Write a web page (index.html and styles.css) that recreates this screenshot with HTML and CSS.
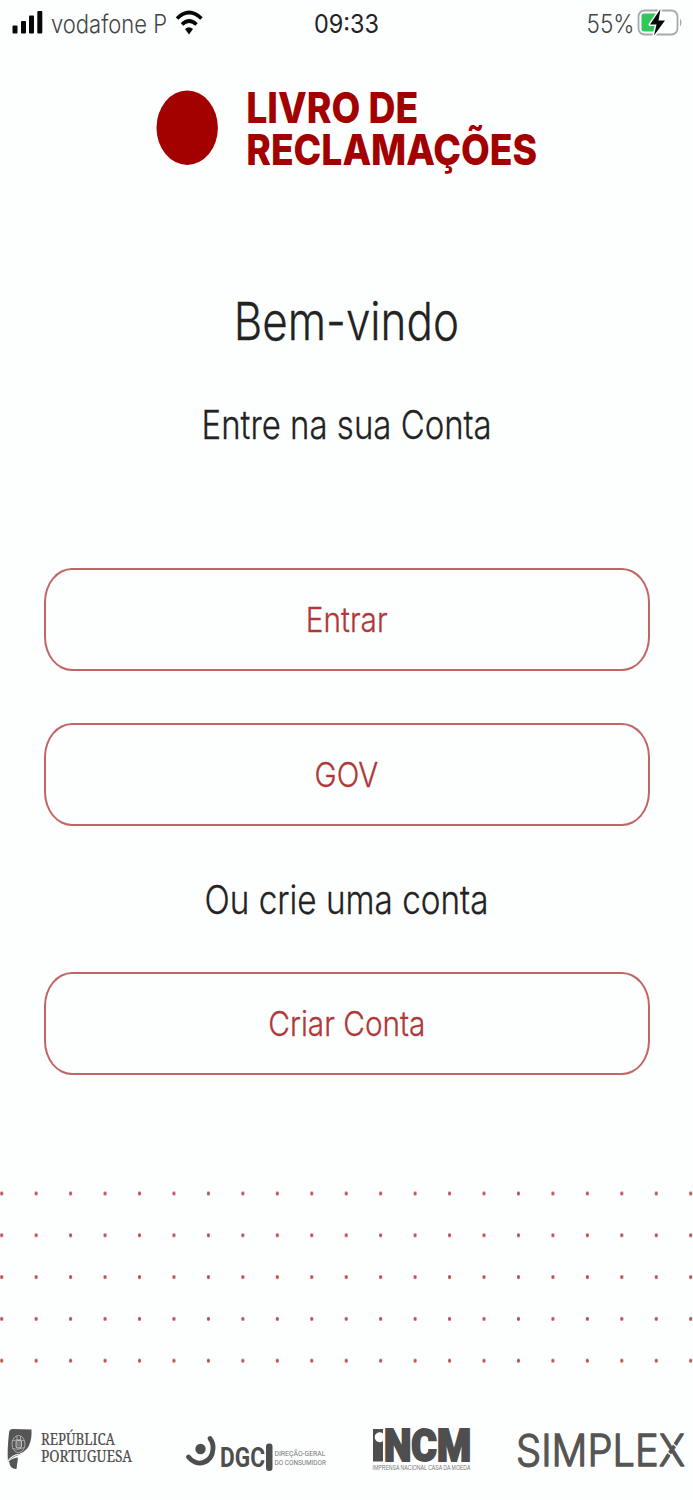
FILE: index.html
```
<!DOCTYPE html>
<html lang="pt">
<head>
<meta charset="utf-8">
<title>Livro de Reclamações</title>
<link rel="stylesheet" href="styles.css">
</head>
<body>
<header class="status">
  <svg class="status-left" width="220" height="46" viewBox="0 0 220 46">
    <g fill="#080808"><rect x="12.5" y="25.5" width="5" height="8" rx="1"/><rect x="21" y="21" width="5" height="12.5" rx="1"/><rect x="29" y="15.5" width="5" height="18" rx="1"/><rect x="37.3" y="11" width="5" height="22.5" rx="1"/></g>
    <text class="carrier" x="51" y="32.5" textLength="116" lengthAdjust="spacingAndGlyphs">vodafone P</text>
    <g fill="none" stroke="#080808" stroke-width="3.6"><path d="M177 18.5Q189 6.5 201.5 18.5"/><path d="M182 24.5Q189 17.5 196.5 24.5"/></g>
    <path d="M185 29Q189 25.5 193 29L189 34.5Z" fill="#080808"/>
  </svg>
  <svg class="status-time" width="80" height="46" viewBox="0 0 80 46"><text class="clock" x="8" y="32.5" textLength="65" lengthAdjust="spacingAndGlyphs">09:33</text></svg>
  <svg class="status-right" width="113" height="46" viewBox="0 0 113 46">
    <text class="percent" x="7.5" y="32.5" textLength="48" lengthAdjust="spacingAndGlyphs">55%</text>
    <rect x="59.5" y="10.5" width="39" height="24" rx="6" fill="none" stroke="#aaa" stroke-width="1.8"/>
    <path d="M65 13.5H78V31.5H65Q62.5 31.5 62.5 29V16Q62.5 13.5 65 13.5Z" fill="#31c759"/>
    <path d="M101 18.5Q104 22.5 101 26.5Z" fill="#aaa"/>
    <path d="M81.5 9L71 24.5H77.5L75 35.5L86 20.5H79.5Z" fill="#080808" stroke="#fdfefe" stroke-width="3" stroke-linejoin="round" paint-order="stroke"/>
  </svg>
</header>
<div class="brand">
  <svg width="405" height="100" viewBox="145 80 405 100">
    <ellipse cx="187.2" cy="127.7" rx="30.7" ry="37.2" fill="#a30000"/>
    <g class="brand-name"><text x="246.2" y="122.5" textLength="172" lengthAdjust="spacingAndGlyphs">LIVRO DE</text><text x="246.2" y="164.7" textLength="291" lengthAdjust="spacingAndGlyphs">RECLAMAÇÕES</text></g>
  </svg>
</div>
<main class="login">
  <h1 class="title"><span>Bem-vindo</span></h1>
  <p class="subtitle"><span>Entre na sua Conta</span></p>
  <div class="actions">
    <button class="btn"><span>Entrar</span></button>
    <button class="btn"><span>GOV</span></button>
  </div>
  <p class="create"><span>Ou crie uma conta</span></p>
  <button class="btn"><span>Criar Conta</span></button>
</main>
<svg class="dots" width="693" height="190" viewBox="0 0 693 190">
  <defs><pattern id="dot" x="-15.5" y="-7.4" width="34.45" height="41.8" patternUnits="userSpaceOnUse"><ellipse cx="17.2" cy="20.9" rx="1.6" ry="2" fill="#bb4b4b"/></pattern></defs>
  <rect width="693" height="190" fill="url(#dot)"/>
</svg>
<footer class="partners">
  <svg width="175" height="60" viewBox="0 0 175 60">
    <path d="M9 13Q9 9 13 9L31.5 9.5Q32.5 29 20 34.5Q11 37 8 42Q7 30 9 13Z" fill="#555"/>
    <path d="M9 41Q12 38 18 37.5L16.5 49Q10 49.5 9 41Z" fill="#555"/>
    <g fill="none" stroke="#aaa" stroke-width="1"><ellipse cx="18.5" cy="24" rx="6.5" ry="8.5"/><path d="M12 21Q18 18 25 21M12 28Q18 31 25 27M17 16V20M20.5 16V20"/></g>
    <rect x="16" y="20.5" width="5.5" height="7.5" rx="1.5" fill="#777" stroke="#ddd" stroke-width=".8"/>
    <path d="M8 41Q12 35 20 34Q29 31 31 22" fill="none" stroke="#f2f2f2" stroke-width="1.2"/>
    <g class="republic"><text x="41" y="24.5" textLength="74" lengthAdjust="spacingAndGlyphs">REPÚBLICA</text><text x="41" y="41.5" textLength="91" lengthAdjust="spacingAndGlyphs">PORTUGUESA</text></g>
  </svg>
  <svg width="175" height="60" viewBox="0 0 175 60">
    <circle cx="25.5" cy="29" r="5.2" fill="#4e4e4e"/>
    <path d="M13.5 37C22 48 37 43 38 29Q38.5 23 35 18.5" fill="none" stroke="#4e4e4e" stroke-width="4.8" stroke-linecap="round"/>
    <text class="dgc" x="45" y="46.5" textLength="45" lengthAdjust="spacingAndGlyphs">DGC</text>
    <rect x="91" y="23.5" width="6.5" height="27.5" rx="3" fill="#4e4e4e"/>
    <g class="dgc-small"><text x="99.5" y="36.2" textLength="51" lengthAdjust="spacingAndGlyphs">DIREÇÃO-GERAL</text><text x="99.5" y="44.7" textLength="51.5" lengthAdjust="spacingAndGlyphs">DO CONSUMIDOR</text></g>
  </svg>
  <svg width="155" height="60" viewBox="350 0 155 60">
    <path d="M373 9H383V13.5A5 5 0 1 0 383 21V41.5H373Z" fill="#4e4e4e"/>
    <text class="incm" x="384" y="41" textLength="87" lengthAdjust="spacingAndGlyphs">NCM</text>
    <text class="incm-small" x="372.5" y="49.5" textLength="98" lengthAdjust="spacingAndGlyphs">IMPRENSA NACIONAL CASA DA MOEDA</text>
  </svg>
  <svg width="188" height="60" viewBox="505 0 188 60">
    <text class="simplex" x="516" y="45.5" textLength="169" lengthAdjust="spacingAndGlyphs">SIMPLEX</text>
    <path d="M671.5 22.5L677.5 27.500M666 31L672 36" stroke="#fdfefe" stroke-width="1.3"/>
  </svg>
</footer>
</body>
</html>
```
FILE: styles.css
```
* { box-sizing: border-box; }
body { margin: 0; width: 693px; height: 1500px; overflow: hidden; background: #fdfefe; font-family: Inter, "Noto Sans", sans-serif; color: #222; display: flex; flex-direction: column; }
svg { display: block; flex: none; overflow: visible; }
h1, p { margin: 0; font-weight: 350; }
.status { display: flex; height: 46px; }
.status-left { margin-right: 87px; }
.status-time { margin: 0 193px 0 -1px; }
.carrier, .percent { font-size: 25.5px; font-weight: 350; fill: #444; }
.clock { font-size: 25.5px; font-weight: 400; fill: #222; }
.brand { padding: 34px 0 0 145px; height: 134px; }
.brand-name { font-size: 43px; font-weight: 800; fill: #a30000; }
.login { display: flex; flex-direction: column; align-items: center; height: 1000px; padding-top: 110px; }
.login span { display: inline-block; white-space: nowrap; -webkit-text-stroke: .3px currentColor; }
.title { font-size: 52px; line-height: 64px; }
.title span { transform: scaleX(.845); }
.subtitle { margin-top: 47px; font-size: 39px; line-height: 48px; }
.subtitle span { transform: scaleX(.845); }
.actions { display: flex; flex-direction: column; gap: 52px; margin-top: 119px; }
.btn { width: 606px; height: 103px; padding: 0; border: 2px solid #c26565; border-radius: 28px / 34px; background: transparent; color: #b03838; font: 350 34px/42px Inter, "Noto Sans", sans-serif; }
.btn span { transform: scaleX(.875); }
.create { margin: 50px 0 48px; font-size: 39px; line-height: 48px; }
.create span { transform: scaleX(.853); }
.partners { display: flex; margin-top: 50px; height: 60px; }
.republic { font-family: "Noto Serif", "Liberation Serif", serif; font-size: 17px; fill: #4c4c4c; stroke: #4c4c4c; stroke-width: .2; }
.dgc { font-family: Roboto, sans-serif; font-size: 27px; font-weight: 700; fill: #4e4e4e; }
.dgc-small { font-family: Roboto, sans-serif; font-size: 7.5px; fill: #777; }
.incm { font-family: Roboto, sans-serif; font-size: 43.5px; font-weight: 900; fill: #4e4e4e; stroke: #4e4e4e; stroke-width: 2; }
.incm-small { font-family: "Liberation Sans", sans-serif; font-size: 7px; fill: #777; }
.simplex { font-size: 43.5px; font-weight: 300; fill: #555; stroke: #555; stroke-width: 1.3; stroke-linejoin: round; }
```
